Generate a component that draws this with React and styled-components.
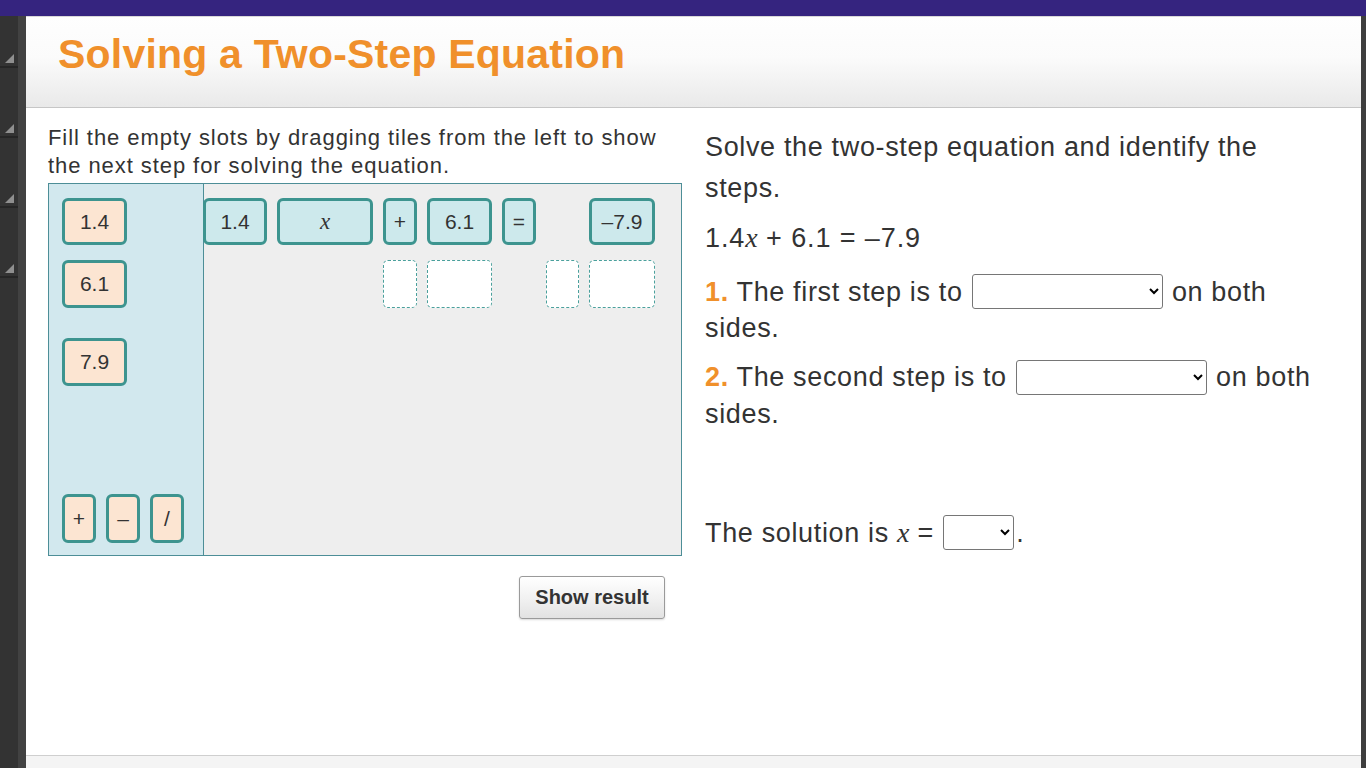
import styled, { createGlobalStyle } from "styled-components";

const GlobalStyle = createGlobalStyle`
  html, body {
    margin: 0;
    padding: 0;
    height: 100%;
    overflow: hidden;
  }
  body {
    font-family: "Liberation Sans", Arial, sans-serif;
    color: #333;
  }
`;

const Page = styled.div`
  width: 1366px;
  height: 768px;
  display: flex;
  flex-direction: column;
  background: #3a3a3a;
`;

const TopBar = styled.div`
  height: 16px;
  flex-shrink: 0;
  background: #35247f;
`;

const Body = styled.div`
  flex: 1;
  display: flex;
  min-height: 0;
`;

/* left dark rail with little resize triangles */
const SideRail = styled.div`
  width: 26px;
  flex-shrink: 0;
  display: flex;
  flex-direction: column;
  background: linear-gradient(90deg, #333 0 18px, #424242 18px 26px);
`;

const RailSeg = styled.div`
  height: ${(p) => p.h}px;
  width: 18px;
  position: relative;
  border-bottom: 2px solid #262626;
  box-sizing: border-box;

  &::after {
    content: "";
    position: absolute;
    right: 4px;
    bottom: 3px;
    width: 0;
    height: 0;
    border-left: 9px solid transparent;
    border-bottom: 9px solid #8f8f8f;
  }
`;

const RightRail = styled.div`
  width: 5px;
  flex-shrink: 0;
  background: #3e3e3e;
`;

const Main = styled.div`
  flex: 1;
  display: flex;
  flex-direction: column;
  background: #fff;
  min-width: 0;
`;

const Header = styled.header`
  height: 92px;
  flex-shrink: 0;
  box-sizing: border-box;
  border-top: 1px solid #d8d8d8;
  border-bottom: 1px solid #c6c6c6;
  background: linear-gradient(180deg, #fefefe 0%, #fbfbfb 45%, #e9e9e9 100%);
  padding: 0 0 0 32px;
  display: flex;
  align-items: center;
`;

const Title = styled.h1`
  margin: 0 0 16px 0;
  font-size: 41px;
  font-weight: bold;
  color: #f0902b;
  letter-spacing: 0.2px;
`;

const Content = styled.div`
  flex: 1;
  display: flex;
  padding: 16px 0 0 22px;
  gap: 23px;
`;

const Footer = styled.div`
  height: 12px;
  flex-shrink: 0;
  border-top: 1px solid #cfcfcf;
  background: #f4f4f4;
`;

const LeftCol = styled.div`
  width: 634px;
  display: flex;
  flex-direction: column;
`;

const Instructions = styled.p`
  margin: 0 0 3px 0;
  font-size: 22px;
  line-height: 28px;
  letter-spacing: 0.93px;
  white-space: nowrap;
  color: #333;
`;

const DragArea = styled.div`
  height: 373px;
  box-sizing: border-box;
  border: 1px solid #4d8e97;
  display: flex;
  background: #eeeeee;
`;

const Palette = styled.div`
  width: 155px;
  box-sizing: border-box;
  border-right: 1px solid #4d8e97;
  background: #d2e8ee;
  padding: 14px 0 12px 13px;
  display: flex;
  flex-direction: column;
`;

const PaletteTiles = styled.div`
  display: flex;
  flex-direction: column;
  gap: 15px;
`;

const OpRow = styled.div`
  margin-top: auto;
  display: flex;
  gap: 10px;
`;

const Tile = styled.div`
  width: ${(p) => p.w || 65}px;
  height: ${(p) => p.h || 47}px;
  box-sizing: border-box;
  border: 3px solid #3d948f;
  border-radius: 6px;
  background: ${(p) => (p.$given ? "#cde9ec" : "#fce5d2")};
  display: flex;
  align-items: center;
  justify-content: center;
  font-size: 21px;
  color: #333;
  margin-top: ${(p) => p.mt || 0}px;
`;

const Slot = styled.div`
  height: 48px;
  box-sizing: border-box;
  border: 1px dashed #4aa09c;
  border-radius: 5px;
  background: #fff;
`;

const Work = styled.div`
  flex: 1;
  padding-top: 14px;
  margin-left: -1px;
  display: grid;
  grid-template-columns: 64px 96px 34px 65px 34px 33px 66px;
  grid-auto-rows: min-content;
  column-gap: 10px;
  row-gap: 15px;
  align-content: start;
`;

const Cell = styled.div`
  grid-column: ${(p) => p.col};
`;

const Var = styled.i`
  font-family: "Liberation Serif", "Times New Roman", serif;
  font-style: italic;
  font-size: ${(p) => p.size || 23}px;
  letter-spacing: 0;
`;

const ButtonRow = styled.div`
  display: flex;
  justify-content: flex-end;
  padding: 20px 17px 0 0;
`;

const ShowButton = styled.button`
  width: 146px;
  height: 43px;
  padding: 0;
  font-family: "Liberation Sans", Arial, sans-serif;
  font-weight: bold;
  font-size: 20px;
  color: #333;
  border: 1px solid #9a9a9a;
  border-radius: 3px;
  background: linear-gradient(180deg, #ffffff 0%, #f2f2f2 50%, #e2e2e2 100%);
  box-shadow: 0 1px 2px rgba(0, 0, 0, 0.15);
`;

const RightCol = styled.div`
  width: 630px;
  padding-top: 3px;
  font-size: 27px;
  letter-spacing: 0.65px;
  color: #333;
  white-space: nowrap;
`;

const Lead = styled.p`
  margin: 0 0 8px 0;
  line-height: 41px;
`;

const Equation = styled.p`
  margin: 0 0 15px 0;
  line-height: 42px;
  letter-spacing: 0.9px;
`;

const Step = styled.p`
  margin: 0 0 14px 0;
  line-height: 35px;

  &:first-of-type {
    margin-top: 0;
  }
`;

const Num = styled.span`
  color: #f0902b;
  font-weight: bold;
`;

const Choice = styled.select`
  width: ${(p) => p.w}px;
  height: 35px;
  vertical-align: middle;
  margin: 0 ${(p) => (p.$tight ? 2 : 1)}px 0 1px;
  font-size: 16px;
  border: 1px solid #767676;
  border-radius: 3px;
  background: #fff;
  position: relative;
  top: -2px;
`;

const Solution = styled.p`
  margin: 83px 0 0 0;
  line-height: 35px;
`;

const StepFirst = styled(Step)`
  padding-top: 1px;
`;

const railSegs = [52, 70, 70, 70];

export default function App() {
  return (
    <Page>
      <GlobalStyle />
      <TopBar />
      <Body>
        <SideRail>
          {railSegs.map((h, i) => (
            <RailSeg key={i} h={h} />
          ))}
        </SideRail>
        <Main>
          <Header>
            <Title>Solving a Two-Step Equation</Title>
          </Header>
          <Content>
            <LeftCol>
              <Instructions>
                Fill the empty slots by dragging tiles from the left to show
                <br />
                the next step for solving the equation.
              </Instructions>
              <DragArea>
                <Palette>
                  <PaletteTiles>
                    <Tile>1.4</Tile>
                    <Tile h={48}>6.1</Tile>
                    <Tile h={48} mt={15}>7.9</Tile>
                  </PaletteTiles>
                  <OpRow>
                    <Tile w={34} h={49}>+</Tile>
                    <Tile w={34} h={49}>–</Tile>
                    <Tile w={34} h={49}>/</Tile>
                  </OpRow>
                </Palette>
                <Work>
                  <Cell col={1}><Tile $given w={64}>1.4</Tile></Cell>
                  <Cell col={2}><Tile $given w={96}><Var>x</Var></Tile></Cell>
                  <Cell col={3}><Tile $given w={34}>+</Tile></Cell>
                  <Cell col={4}><Tile $given w={65}>6.1</Tile></Cell>
                  <Cell col={5}><Tile $given w={34}>=</Tile></Cell>
                  <Cell col={7}><Tile $given w={66}>–7.9</Tile></Cell>
                  <Cell col={3}><Slot /></Cell>
                  <Cell col={4}><Slot /></Cell>
                  <Cell col={6}><Slot /></Cell>
                  <Cell col={7}><Slot /></Cell>
                </Work>
              </DragArea>
              <ButtonRow>
                <ShowButton>Show result</ShowButton>
              </ButtonRow>
            </LeftCol>
            <RightCol>
              <Lead>
                Solve the two-step equation and identify the
                <br />
                steps.
              </Lead>
              <Equation>
                1.4<Var size={28}>x</Var> + 6.1 = –7.9
              </Equation>
              <StepFirst>
                <Num>1.</Num> The first step is to{" "}
                <Choice w={191} defaultValue="">
                  <option value=""></option>
                </Choice>{" "}
                on both
                <br />
                sides.
              </StepFirst>
              <Step>
                <Num>2.</Num> The second step is to{" "}
                <Choice w={191} defaultValue="">
                  <option value=""></option>
                </Choice>{" "}
                on both
                <br />
                sides.
              </Step>
              <Solution>
                The solution is <Var size={28}>x</Var> ={" "}
                <Choice w={71} $tight defaultValue="">
                  <option value=""></option>
                </Choice>
                .
              </Solution>
            </RightCol>
          </Content>
          <Footer />
        </Main>
        <RightRail />
      </Body>
    </Page>
  );
}
